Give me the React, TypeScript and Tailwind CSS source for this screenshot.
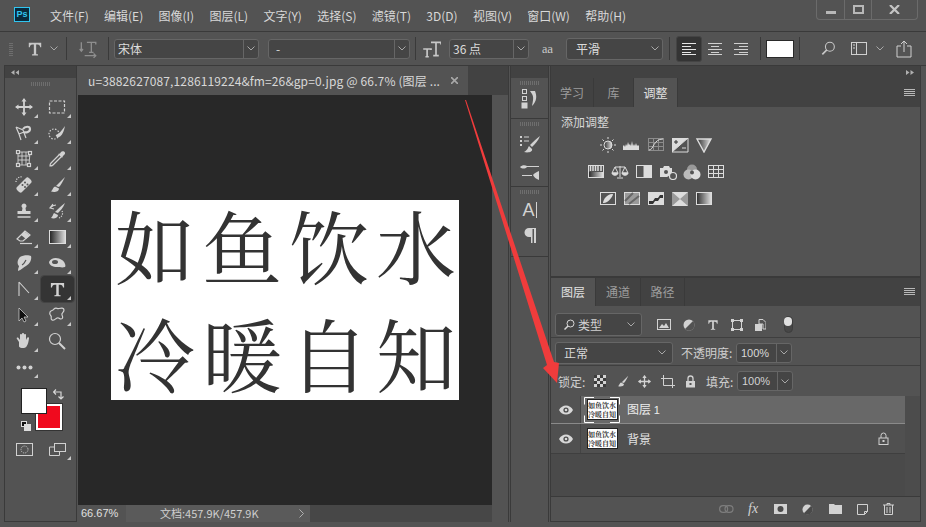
import type { ReactNode } from "react"

const CJK = "font-['Noto_Sans_CJK_SC','Liberation_Sans',sans-serif]"

const menus = ["文件(F)", "编辑(E)", "图像(I)", "图层(L)", "文字(Y)", "选择(S)", "滤镜(T)", "3D(D)", "视图(V)", "窗口(W)", "帮助(H)"]

function Svg({ size = 18, children, className = "" }: { size?: number; children: ReactNode; className?: string }) {
  return (
    <svg width={size} height={size} viewBox="0 0 18 18" fill="none" stroke="currentColor" strokeWidth="1.2" className={className}>
      {children}
    </svg>
  )
}

function Chevron({ className = "" }: { className?: string }) {
  return (
    <svg width="8" height="5" viewBox="0 0 8 5" fill="none" stroke="#a8a8a8" strokeWidth="1" className={className}>
      <path d="M0.5 0.5 4 4 7.5 0.5" />
    </svg>
  )
}

function Divider() {
  return <div className="h-[23px] w-px bg-[#3a3a3a]" />
}

function Grip({ className = "" }: { className?: string }) {
  return <div className={`h-[4px] w-[20px] bg-[repeating-linear-gradient(90deg,#6e6e6e_0,#6e6e6e_1px,transparent_1px,transparent_2px)] ${className}`} />
}

function Select({ w, text, split, className = "" }: { w: string; text: string; split?: boolean; className?: string }) {
  return (
    <div className={`flex h-[20px] items-center rounded-[3px] border border-[#666] bg-[#454545] text-[12px] text-[#dcdcdc] ${w} ${className}`}>
      <span className="flex-1 whitespace-nowrap pl-[3px] leading-[17px]">{text}</span>
      <span className={`flex h-full w-[15px] items-center justify-center ${split ? "border-l border-[#666]" : ""}`}>
        <Chevron />
      </span>
    </div>
  )
}

function MenuLines() {
  return (
    <svg width="11" height="8" viewBox="0 0 11 8" fill="none" stroke="#b8b8b8" strokeWidth="1">
      <path d="M0 .5h11M0 2.500h11M0 4.500h11M0 6.500h11" />
    </svg>
  )
}

function TGlyph({ size = 18 }: { size?: number }) {
  return (
    <svg width={size} height={size} viewBox="0 0 18 18" fill="currentColor">
      <path d="M2 2h14v5h-1.200c-.3-2-1-3-3-3H10.300v10c0 .8.500 1 2 1v1.200H5.700V15c1.500 0 2-.2 2-1V4H6.200c-2 0-2.700 1-3 3H2z" />
    </svg>
  )
}

function Tool({ children, active, corner = true }: { children: ReactNode; active?: boolean; corner?: boolean }) {
  return (
    <div className={`relative flex h-[26px] w-[33px] items-center justify-center rounded-[3px] text-[#d2d2d2] ${active ? "bg-[#343434] outline outline-1 outline-[#444]" : ""}`}>
      {children}
      {corner && <span className="absolute bottom-[2px] right-[3px] h-0 w-0 border-b-[4px] border-l-[4px] border-b-[#c8c8c8] border-l-transparent" />}
    </div>
  )
}

const toolIcons: ReactNode[] = [
  <Svg key="move"><path d="M9 1v16M1 9h16" strokeWidth="1.800" /><path d="M9 0 6.500 3.500h5zM9 18l-2.500-3.500h5zM0 9l3.500-2.500v5zM18 9l-3.500-2.500v5z" fill="currentColor" stroke="none" /></Svg>,
  <Svg key="marquee"><rect x="1.500" y="3" width="15" height="12" strokeDasharray="3 1.500" /></Svg>,
  <Svg key="lasso"><path d="M1 3l7 3 3 8M1 3l3 7 5-2M4 10l2 6" /><path d="M8 5c2-3 7-3 7 0s-4 4-6 3" strokeWidth="2.200" /></Svg>,
  <Svg key="quick"><circle cx="6" cy="10" r="5" strokeDasharray="1.500 1.500" /><path d="M8 11c3-1 6-5 9-9-1 5-3 10-6 11-2 .5-4-1-3-2z" fill="currentColor" stroke="none" /></Svg>,
  <Svg key="crop"><path d="M3 2h12l-1 13H3z M7 2v13M11 2v13M3 6h12M3 10h11" strokeWidth=".9" /><rect x="1.500" y=".5" width="3" height="3" fill="#535353" /><rect x="13.500" y="1.500" width="3" height="3" fill="#535353" /><rect x="1.500" y="13.500" width="3" height="3" fill="#535353" /><rect x="12.500" y="13.500" width="3" height="3" fill="#535353" /></Svg>,
  <Svg key="eyedrop"><path d="M11 5 3 13c-1 1-1 2-1 3 1 0 2 0 3-1l8-8" /><path d="M10 4l4 4 1-2 1.500-1.500c1-1 .5-2.500-.5-3s-2-.5-3 .5L12 3.500z" fill="currentColor" stroke="none" /></Svg>,
  <Svg key="heal"><path d="M2 11 11 2c1-1 2-1 4 1s2 3 1 4l-9 9c-1 1-2 1-4-1s-2-3-1-4z" fill="currentColor" stroke="none" /><circle cx="7.500" cy="9" r="1" fill="#535353" stroke="none" /><circle cx="10" cy="6.500" r="1" fill="#535353" stroke="none" /><circle cx="10" cy="11" r="1" fill="#535353" stroke="none" /><circle cx="12.500" cy="8.500" r="1" fill="#535353" stroke="none" /><path d="M1 6a5 5 0 0 1 6-5" strokeDasharray="1.200 1.200" /></Svg>,
  <Svg key="brush"><path d="M8 10c3-3 6-6 9-9-2 4-4 8-6 10z" fill="currentColor" stroke="none" /><path d="M7 10.500c-2 .5-2 3-4 5 3 1 8 .5 8-3z" fill="currentColor" stroke="none" /></Svg>,
  <Svg key="stamp"><path d="M9 1.500a2.500 2.500 0 0 1 1.500 4.500L11 9h4.500v3h-13V9H7l.5-3A2.500 2.500 0 0 1 9 1.500z" fill="currentColor" stroke="none" /><path d="M2.500 15h13" strokeWidth="1.500" /></Svg>,
  <Svg key="history"><path d="M7 10c3-3 6-6 10-9-2 5-5 8-7 10zM6 11c-1 1-1 3-3 5 3 1 7 0 7-3z" fill="currentColor" stroke="none" /><path d="M8 3C6 3 4 4 2 6M5 2l-3 4 4 1" /><path d="M14 9a5 5 0 0 1-3 7" strokeDasharray="1.200 1.200" /></Svg>,
  <Svg key="eraser"><path d="M2 11 10 3l5 4-7 6H5z" /><path d="M9.500 3.500 15 7.500 11 11 6 7z" fill="currentColor" stroke="none" /><path d="M5 15.500h12" /></Svg>,
  <svg key="gradient" width="17" height="14" viewBox="0 0 17 14"><defs><linearGradient id="gt"><stop offset="0" stopColor="#222" /><stop offset="1" stopColor="#ddd" /></linearGradient></defs><rect x=".5" y=".5" width="16" height="13" fill="url(#gt)" stroke="#ddd" /></svg>,
  <Svg key="smudge"><path d="M5 3c3-2 9-2 11-1 1 3-1 8-5 10-2 1-5 4-8 5 0-3 1-4 1-5-2-2-2-6 1-9z" fill="currentColor" stroke="none" /><path d="M7 11c2-1 3-3 4-5" stroke="#535353" /></Svg>,
  <Svg key="dodge"><path d="M1 8c2-5 9-5 13-2 3 2 4 6 3 7-3 1-5 0-8 0-4 0-8-2-8-5z" fill="currentColor" stroke="none" /><ellipse cx="7" cy="8" rx="3" ry="2" fill="#535353" stroke="none" /></Svg>,
  <Svg key="pen"><path d="M4 2v14M4 2l10 11" strokeWidth="1.100" /></Svg>,
  <TGlyph key="type" size={17} />,
  <svg key="arrow" width="12" height="16" viewBox="0 0 12 16" fill="#111" stroke="#ddd" strokeWidth=".7"><path d="M1 1v13l3-3 2 4 2-1-2-4h4z" /></svg>,
  <Svg key="shape"><path d="M6 3c2-2 3 0 5-.5s5-1 5 1.500-3 3-2 5 1 4-1 4-2-2-4-1-3 3-5 2 0-3-1-4-2-2-1-4 3-1 4-3z" /></Svg>,
  <Svg key="hand"><path d="M4 10 2 7c-1-1 .5-2 1.500-1L5 8V3c0-1.300 2-1.300 2 0v4V2c0-1.300 2-1.300 2 0v5V3c0-1.300 2-1.300 2 0v5l1-2c.5-1.200 2.300-.8 2 .5-.5 3-1 6-2.500 8-1.500 2-6 2-7.500 0z" fill="currentColor" stroke="none" /></Svg>,
  <Svg key="zoom"><circle cx="7" cy="7" r="5.500" /><path d="M11 11l6 6" strokeWidth="2" /></Svg>,
  <svg key="more" width="17" height="5" viewBox="0 0 17 5" fill="currentColor"><circle cx="2.500" cy="2.500" r="2" /><circle cx="8.500" cy="2.500" r="2" /><circle cx="14.500" cy="2.500" r="2" /></svg>,
]

const adjustRows = [
  ["sun", "hist", "curve", "expo", "tri"],
  ["hsl", "scale", "half", "cam", "mix", "grid"],
  ["inv", "post", "thres", "sel", "grad"],
]

function AdjustIcon({ kind }: { kind: string }) {
  const box = "#dcdcdc"
  return (
    <svg width="18" height="16" viewBox="0 0 18 16" fill="none" stroke={box} strokeWidth="1">
      <defs>
        <linearGradient id={`g-${kind}`}>
          <stop offset="0" stopColor="#2e2e2e" />
          <stop offset="1" stopColor="#e2e2e2" />
        </linearGradient>
      </defs>
      {kind === "sun" && <><circle cx="9" cy="8" r="4" fill="url(#g-sun)" /><path d="M9 0v2M9 14v2M1 8h2M15 8h2M3.500 2.500l1.500 1.500M13 12l1.500 1.500M14.500 2.500 13 4M5 12l-1.500 1.500" /></>}
      {kind === "hist" && <path d="M0 13V9l1-1 1 2 1-3 1 2 1-4 1 3 1-1 1 2 1-5 1 5 1-2 1 2 1-3 1 3 1-1 1 1v4z" fill={box} stroke="none" />}
      {kind === "curve" && <><rect x="1.500" y="1.500" width="15" height="12" stroke="#8c8c8c" /><path d="M6.500 1.500v12M11.500 1.500v12M1.500 5.500h15M1.500 9.500h15" stroke="#8c8c8c" /><path d="M2 13c5 0 4-11 14-11" /></>}
      {kind === "expo" && <><path d="M1 1h16v14H1z" fill={box} stroke="none" /><path d="M1 15 17 1v14z" fill="#535353" stroke={box} /><path d="M3 5h4M5 3v4" stroke="#333" /><path d="M11 11h4" /></>}
      {kind === "tri" && <path d="M2 2h14L9 15z" fill="url(#g-tri)" strokeWidth="1.400" />}
      {kind === "hsl" && <><rect x="1.500" y="1.500" width="15" height="12" /><path d="M3.500 2v5M6 2v5M8.500 2v5M11 2v5M14 2v5" strokeWidth="1.500" /><rect x="2" y="8" width="14" height="5" fill="url(#g-hsl)" stroke="none" /></>}
      {kind === "scale" && <><path d="M9 2v11M4 3h10M6 14h6" /><path d="M4 3 1 9h6zM14 3l-3 6h6z" /><path d="M1 9c0 3 6 3 6 0zM11 9c0 3 6 3 6 0z" fill={box} /></>}
      {kind === "half" && <><rect x="1.500" y="1.500" width="15" height="12" /><rect x="9" y="1.500" width="7.500" height="12" fill={box} /></>}
      {kind === "cam" && <><path d="M1 4h3l1-2h5l1 2h2v6l-5 3H1z" fill={box} stroke="none" /><circle cx="7" cy="8" r="2" fill="#535353" stroke="none" /><circle cx="14" cy="12" r="3.500" fill="#535353" stroke={box} strokeWidth="1.200" /></>}
      {kind === "mix" && <><circle cx="9" cy="5.500" r="5" fill="#999" stroke="none" /><circle cx="5.500" cy="10.500" r="5" fill="#bbb" stroke="none" /><circle cx="12.500" cy="10.500" r="5" fill="#ddd" stroke="none" /><circle cx="9" cy="8.500" r="2" fill="#555" stroke="none" /></>}
      {kind === "grid" && <><rect x="1.500" y="1.500" width="15" height="12" /><path d="M6.500 1.500v12M11.500 1.500v12M1.500 5.500h15M1.500 9.500h15" /></>}
      {kind === "inv" && <><rect x="1.500" y="1.500" width="15" height="12" /><path d="M4 12c4 1 10-6 10-9-5-1-10 5-10 9z" fill={box} stroke="none" /></>}
      {kind === "post" && <><rect x="1.500" y="1.500" width="15" height="12" fill="#9a9a9a" /><path d="M2 10 10 2M6 13l10-8" strokeWidth="2" stroke="#666" /></>}
      {kind === "thres" && <><rect x="1.500" y="1.500" width="15" height="12" fill={box} /><path d="M2 10h4l2-3h3l2-3h3v3h-3l-2 3H8l-2 3H2z" fill="#333" stroke="none" /></>}
      {kind === "sel" && <><path d="M1 1h16v14H1z" fill="#999" stroke="none" /><path d="M1 1h16L9 8zM1 15h16L9 8z" fill={box} stroke="none" /></>}
      {kind === "grad" && <rect x="1.500" y="1.500" width="15" height="12" fill="url(#g-grad)" />}
    </svg>
  )
}

function Thumb({ selected }: { selected?: boolean }) {
  return (
    <div className="relative ml-[4px] flex h-[24px] w-[34px] items-center justify-center">
      <div className="flex h-[21px] w-[31px] flex-col items-center justify-center border border-[#222] bg-white font-['Noto_Serif_CJK_SC','Noto_Sans_CJK_SC',serif] text-[7px] font-bold leading-[9px] text-[#333]">
        <span className="whitespace-nowrap">如鱼饮水</span>
        <span className="whitespace-nowrap">冷暖自知</span>
      </div>
      {selected && (
        <svg width="36" height="26" viewBox="0 0 36 26" fill="none" stroke="#fff" strokeWidth="1" className="absolute left-[-1px] top-[-1px]">
          <path d="M10 .5H.5v7M26 .5h9.500v7M10 25.500H.5v-7M26 25.500h9.500v-7" />
        </svg>
      )}
    </div>
  )
}

function Eye() {
  return (
    <svg width="14" height="10" viewBox="0 0 14 10" fill="#d8d8d8">
      <path d="M0 5c3-6 11-6 14 0-3 6-11 6-14 0z" />
      <circle cx="7" cy="5" r="2.600" fill="#4a4a4a" />
      <circle cx="7" cy="5" r="1.300" />
    </svg>
  )
}

function LockIcon({ className = "" }: { className?: string }) {
  return (
    <svg width="11" height="13" viewBox="0 0 11 13" fill="none" stroke="currentColor" strokeWidth="1.300" className={className}>
      <path d="M3 6V3.500a2.500 2.500 0 0 1 5 0V6" />
      <rect x="1" y="6" width="9" height="6.500" fill="currentColor" stroke="none" />
      <rect x="4.500" y="8" width="2" height="2" fill="#535353" stroke="none" />
    </svg>
  )
}

function PercentBox() {
  return (
    <div className="flex h-[20px] w-[56px] items-center rounded-[3px] border border-[#666] bg-[#454545]">
      <span className="w-[40px] border-r border-[#666] pl-[4px] font-['Liberation_Sans',sans-serif] text-[11px] leading-[18px]">100%</span>
      <Chevron className="ml-[3px]" />
    </div>
  )
}

export default function App() {
  return (
    <div className={`relative flex h-[527px] w-[926px] flex-col overflow-hidden bg-[#535353] text-[12px] text-[#d8d8d8] ${CJK}`}>
      {/* Menu bar */}
      <div className="flex h-[32px] shrink-0 items-start border-b border-[#3a3a3a] pl-[14px]">
        <div className="mt-[7px] flex h-[15px] w-[16px] items-center justify-center border border-[#31c5f0] bg-[#0a2a3c] font-['Liberation_Sans',sans-serif] text-[9px] font-bold leading-none text-[#31c5f0]">
          Ps
        </div>
        <div className="ml-[20px] mt-[7px] flex gap-[15.3px] text-[12px] leading-[17px]">
          {menus.map((m) => (
            <span key={m} className="whitespace-nowrap">{m}</span>
          ))}
        </div>
        <div className="ml-auto mr-[8px] flex h-[20px] w-[102px] rounded-b-[4px] border border-t-0 border-[#6b6b6b] text-[#c4c4c4]">
          <div className="flex w-[28px] items-center justify-center border-r border-[#6b6b6b]"><div className="mt-[5px] h-[3px] w-[10px] bg-[#b8b8b8]" /></div>
          <div className="flex w-[27px] items-center justify-center border-r border-[#6b6b6b]"><div className="h-[9px] w-[11px] border-2 border-[#b8b8b8]" /></div>
          <div className="flex flex-1 items-center justify-center">
            <svg width="11" height="9" viewBox="0 0 11 9" stroke="#c4c4c4" strokeWidth="2.200"><path d="M1 0l9 9M10 0 1 9" /></svg>
          </div>
        </div>
      </div>

      {/* Options bar */}
      <div className="ml-[4px] flex h-[34px] shrink-0 items-center border-b border-[#3a3a3a] text-[#c8c8c8]">
        <div className="ml-[5px] h-[14px] w-[4px] bg-[repeating-linear-gradient(0deg,#6e6e6e_0,#6e6e6e_1px,transparent_1px,transparent_2px)]" />
        <div className="ml-[14px] flex w-[31px] items-center gap-[7px]"><TGlyph size={16} /><Chevron /></div>
        <div className="ml-[8px]"><Divider /></div>
        <div className="ml-[11px] text-[#8e8e8e]">
          <Svg size={20}><path d="M8 3h8v2M12 3v9M10 12h4M3 3v8M1.500 9 3 11l1.500-2M6 15h10M14 13l2 2-2 2" /></Svg>
        </div>
        <div className="ml-[10px]"><Divider /></div>
        <Select w="w-[145px]" text="宋体" split className="ml-[5px]" />
        <Select w="w-[142px]" text="-" split className="ml-[9px] [&>span:first-child]:pl-[7px]" />
        <div className="ml-[5px]"><Divider /></div>
        <div className="ml-[5px]">
          <Svg size={20}><path d="M9 3h9v2M13.500 3v12M11 15h5M2 9h7v1M5.500 9v7M4 16h3" strokeWidth="1.500" /></Svg>
        </div>
        <Select w="w-[80px]" text="36 点" split className="ml-[8px]" />
        <span className="ml-[13px] w-[19px] font-['Liberation_Serif',serif] text-[12px] leading-none">a<span className="text-[13px]">a</span></span>
        <Select w="w-[97px]" text="平滑" className="ml-[5px] h-[22px] [&>span:first-child]:pl-[9px]" />
        <div className="ml-[6px]"><Divider /></div>
        <div className="ml-[6px] flex h-[26px] w-[26px] items-center justify-center rounded-[3px] border border-[#444] bg-[#343434]">
          <svg width="14" height="12" viewBox="0 0 14 12" stroke="#e6e6e6"><path d="M0 .5h14M0 3.500h9M0 6.500h14M0 9.500h9M0 11.500h14" /></svg>
        </div>
        <div className="ml-[4px] flex w-[18px] justify-center">
          <svg width="14" height="12" viewBox="0 0 14 12" stroke="#d0d0d0"><path d="M0 .5h14M3 3.500h8M0 6.500h14M3 9.500h8M0 11.500h14" /></svg>
        </div>
        <div className="ml-[8px] flex w-[18px] justify-center">
          <svg width="14" height="12" viewBox="0 0 14 12" stroke="#d0d0d0"><path d="M0 .5h14M5 3.500h9M0 6.500h14M5 9.500h9M0 11.500h14" /></svg>
        </div>
        <div className="ml-[10px]"><Divider /></div>
        <div className="ml-[5px] h-[18px] w-[28px] border border-[#2a2a2a] bg-white" />
        <div className="ml-[5px]"><Divider /></div>
        <div className="ml-[21px]">
          <Svg size={16}><circle cx="10" cy="6.500" r="5" /><path d="M6.500 10 1.500 15" strokeWidth="1.800" /></Svg>
        </div>
        <div className="ml-[14px]">
          <svg width="17" height="13" viewBox="0 0 17 13" fill="none" stroke="#d0d0d0"><rect x=".5" y=".5" width="15" height="12" /><path d="M5.500 1v11" /><path d="M2 3h2M2 6h2" /></svg>
        </div>
        <Chevron className="ml-[8px]" />
        <div className="ml-[12px]">
          <svg width="16" height="18" viewBox="0 0 16 18" fill="none" stroke="#d0d0d0"><path d="M5 6H1v11h14V6h-4M8 12V1M5 4l3-3 3 3" /></svg>
        </div>
      </div>

      {/* Workspace */}
      <div className="flex min-h-0 flex-1 pb-[5px] pl-[4px]">
        {/* Tools */}
        <div className="flex w-[73px] shrink-0 flex-col items-center border-x border-b border-[#3a3a3a]">
          <div className="flex h-[12px] w-full items-center bg-[#424242] pl-[6px] text-[#b0b0b0]">
            <svg width="8" height="5" viewBox="0 0 8 5" fill="currentColor"><path d="M3.500 0v5L0 2.500zM8 0v5L4.500 2.500z" /></svg>
          </div>
          <Grip className="mt-[4px]" />
          <div className="mt-[8px] grid w-[66px] grid-cols-2 justify-items-center">
            {toolIcons.slice(0, 20).map((icon, i) => (
              <Tool key={i} active={i === 15} corner={i !== 19}>{icon}</Tool>
            ))}
            <Tool>{toolIcons[20]}</Tool>
          </div>
          <div className="relative ml-[16px] mt-[8px] h-[46px] w-[46px] self-start">
            <div className="absolute left-[15px] top-[16px] h-[26px] w-[26px] border-2 border-white bg-[#f00a1e] outline outline-1 outline-[#333]" />
            <div className="absolute left-[0px] top-[0px] h-[26px] w-[26px] border border-[#222] bg-white" />
            <svg width="11" height="11" viewBox="0 0 11 11" fill="none" stroke="#d8d8d8" strokeWidth="1.200" className="absolute left-[32px] top-[1px]">
              <path d="M3 .5 .5 3 3 5.500M1 3h7v6M5.500 7.500 8 10l2.500-2.500" />
            </svg>
            <div className="absolute left-[0px] top-[33px] h-[6px] w-[6px] border border-[#ddd] bg-[#111]" />
            <div className="absolute left-[3px] top-[36px] h-[7px] w-[7px] bg-[#ddd]" />
          </div>
          <div className="mt-[2px] grid w-[66px] grid-cols-2 justify-items-center">
            <Tool corner={false}>
              <svg width="17" height="13" viewBox="0 0 17 13" fill="none" stroke="#d0d0d0"><rect x=".5" y=".5" width="16" height="12" /><circle cx="8.500" cy="6.500" r="3.500" strokeDasharray="1 1" /></svg>
            </Tool>
            <Tool>
              <svg width="17" height="13" viewBox="0 0 17 13" fill="none" stroke="#d0d0d0"><rect x="5.500" y=".5" width="11" height="8" /><path d="M5 4H.5v8.500h10V9" /></svg>
            </Tool>
          </div>
        </div>

        {/* Document */}
        <div className="ml-[1px] flex w-[431px] shrink-0 flex-col border-r border-[#3a3a3a]">
          <div className="flex h-[29px] shrink-0 bg-[#424242]">
            <div className="flex w-[390px] items-center justify-between bg-[#535353] pl-[10px] pr-[10px] text-[12px] tracking-[0.13px]">
              <span className="whitespace-nowrap">u=3882627087,1286119224&amp;fm=26&amp;gp=0.jpg @ 66.7% (图层 ...</span>
              <svg width="7" height="7" viewBox="0 0 7 7" stroke="#a8a8a8" strokeWidth="1.600"><path d="M0 0l7 7M7 0 0 7" /></svg>
            </div>
          </div>
          <div className="flex min-h-0 flex-1">
            <div className="flex flex-1 flex-col">
              <div className="flex flex-1 items-center justify-center bg-[#282828]">
                <div className="flex h-[200px] w-[348px] flex-col items-start justify-center bg-white pb-[5px] pl-[4px] font-['Noto_Serif_CJK_SC','Noto_Sans_CJK_SC',serif] text-[80px] leading-[108px] tracking-[7px] text-[#333]">
                  <span className="whitespace-nowrap">如鱼饮水</span>
                  <span className="whitespace-nowrap">冷暖自知</span>
                </div>
              </div>
              <div className="flex h-[17px] shrink-0 items-center bg-[#474747] text-[11px]">
                <span className="flex h-full w-[48px] items-center bg-[#535353] pl-[3px] font-['Liberation_Sans',sans-serif] text-[#e0e0e0]">66.67%</span>
                <div className="flex h-full w-[184px] items-center justify-between bg-[#5a5a5a] pl-[34px] pr-[6px] text-[#cfcfcf]">
                  <span className="whitespace-nowrap">文档:457.9K/457.9K</span>
                  <svg width="5" height="9" viewBox="0 0 5 9" fill="none" stroke="#b0b0b0"><path d="M.5.500l4 4-4 4" /></svg>
                </div>
              </div>
            </div>
            <div className="w-[16px] shrink-0 bg-[#535353]" />
          </div>
        </div>

        <div className="w-[1px] shrink-0" />

        {/* Collapsed dock */}
        <div className="flex w-[39px] shrink-0 flex-col border-x border-[#3a3a3a]">
          <div className="h-[12px] shrink-0 bg-[#424242]" />
          <div className="flex h-[41px] flex-col items-center border-b border-[#3a3a3a] pt-[3px]">
            <Grip />
            <svg width="18" height="24" viewBox="0 0 18 24" fill="none" stroke="#d2d2d2" className="mt-[3px]">
              <rect x="1.500" y="1.500" width="4" height="4" /><rect x="1.500" y="8.500" width="4" height="4" /><rect x="1" y="15" width="5" height="5" fill="#d2d2d2" />
              <path d="M9 3h5c2 5 2 10-3 15 1-5 2-9 0-12z" fill="#d2d2d2" stroke="none" />
            </svg>
          </div>
          <div className="flex h-[68px] flex-col items-center gap-[8px] border-b border-[#3a3a3a] pt-[3px]">
            <Grip />
            <svg width="22" height="20" viewBox="0 0 22 20" fill="#d2d2d2">
              <path d="M1 2h2v2H1zM1 6h2v2H1zM1 10h2v2H1zM5 2.500h5v1H5zM5 6.500h5v1H5z" />
              <path d="M11 11c3-3 6-6 10-9-2 5-5 8-8 11zM10 12c-1 1-1 4-5 6 4 1 9 0 8-3z" />
            </svg>
            <svg width="20" height="16" viewBox="0 0 20 16" fill="#d2d2d2" className="mt-[2px]">
              <path d="M0 3c2-2 5-2 7-1h12v1H7C5 5 2 5 0 3zM2 11h10v1H2zM13 11c1-2 4-3 6-4v9c-3-1-5-3-6-5z" />
            </svg>
          </div>
          <div className="flex h-[70px] flex-col items-center border-b border-[#3a3a3a] pt-[3px] text-[#d2d2d2]">
            <Grip />
            <div className="mt-[4px] flex h-[24px] items-center font-['Liberation_Sans',sans-serif] text-[18px] leading-none">A<span className="ml-[1px] h-[16px] w-px bg-[#d2d2d2]" /></div>
            <svg width="13" height="15" viewBox="0 0 13 15" fill="#d2d2d2" className="mt-[6px]">
              <path d="M6 0h7v15h-2V1H9.500v14H8V9H6A4.500 4.500 0 0 1 6 0z" />
            </svg>
          </div>
        </div>

        {/* Panels */}
        <div className="ml-[1px] flex w-[371px] shrink-0 flex-col border-x border-b border-[#3a3a3a]">
          <div className="flex h-[12px] shrink-0 items-center justify-between bg-[#424242] pl-[1px] pr-[6px] text-[#b0b0b0]">
            <span />
            <svg width="8" height="5" viewBox="0 0 8 5" fill="currentColor"><path d="M0 0v5l3.500-2.500zM4.500 0v5L8 2.500z" /></svg>
          </div>

          {/* Adjustments */}
          <div className="flex h-[200px] shrink-0 flex-col border-b-2 border-[#3a3a3a]">
            <div className="flex h-[29px] shrink-0 items-center bg-[#424242] pr-[5px] text-[#9d9d9d]">
              <span className="flex h-full w-[43px] items-center justify-center border-r border-[#3a3a3a]">学习</span>
              <span className="flex h-full w-[40px] items-center justify-center border-r border-[#3a3a3a]">库</span>
              <span className="flex h-full w-[44px] items-center justify-center border-r border-[#3a3a3a] bg-[#535353] text-[#e2e2e2]">调整</span>
              <span className="ml-auto"><MenuLines /></span>
            </div>
            <div className="pl-[10px] pt-[6px] text-[12px] leading-[17px]">添加调整</div>
            <div className="mt-[7px] flex flex-col items-center gap-[11px] pr-[159px]">
              {adjustRows.map((row, i) => (
                <div key={i} className="flex gap-[6px]">
                  {row.map((k) => <AdjustIcon key={k} kind={k} />)}
                </div>
              ))}
            </div>
          </div>

          {/* Layers */}
          <div className="flex min-h-0 flex-1 flex-col">
            <div className="flex h-[28px] shrink-0 items-center bg-[#424242] pr-[5px] text-[#9d9d9d]">
              <span className="flex h-full w-[45px] items-center justify-center border-r border-[#3a3a3a] bg-[#535353] text-[#e2e2e2]">图层</span>
              <span className="flex h-full w-[45px] items-center justify-center border-r border-[#3a3a3a]">通道</span>
              <span className="flex h-full w-[44px] items-center justify-center border-r border-[#3a3a3a]">路径</span>
              <span className="ml-auto"><MenuLines /></span>
            </div>
            <div className="flex h-[32px] shrink-0 items-center border-b border-[#3f3f3f] pl-[4px] pt-[6px] text-[#d2d2d2]">
              <div className="flex h-[23px] w-[87px] items-center rounded-[3px] border border-[#666] bg-[#454545]">
                <svg width="11" height="11" viewBox="0 0 11 11" fill="none" stroke="#d8d8d8" className="ml-[8px]"><circle cx="6.500" cy="4.500" r="3.500" /><path d="M4 7 .5 10.500" strokeWidth="1.500" /></svg>
                <span className="ml-[3px] flex-1 text-[12px]">类型</span>
                <Chevron className="mr-[6px]" />
              </div>
              <svg width="14" height="11" viewBox="0 0 14 11" className="ml-[15px]"><rect x=".5" y=".5" width="13" height="10" fill="none" stroke="#d2d2d2" /><path d="M2 9l3-4 2 2 2-3 3 5z" fill="#d2d2d2" /></svg>
              <svg width="12" height="12" viewBox="0 0 12 12" className="ml-[12px]"><circle cx="6" cy="6" r="5.500" fill="#d2d2d2" /><path d="M10 2a5.500 5.500 0 0 1-8 8z" fill="#535353" /></svg>
              <div className="ml-[12px] text-[#d2d2d2]"><TGlyph size={12} /></div>
              <svg width="12" height="12" viewBox="0 0 12 12" fill="none" stroke="#d2d2d2" className="ml-[12px]"><rect x="1.500" y="1.500" width="9" height="9" /><rect x="0" y="0" width="3" height="3" fill="#d2d2d2" stroke="none" /><rect x="9" y="0" width="3" height="3" fill="#d2d2d2" stroke="none" /><rect x="0" y="9" width="3" height="3" fill="#d2d2d2" stroke="none" /><rect x="9" y="9" width="3" height="3" fill="#d2d2d2" stroke="none" /></svg>
              <svg width="11" height="12" viewBox="0 0 11 12" className="ml-[12px]"><path d="M4 .5h4l3 3V10H8V5H4z" fill="none" stroke="#d2d2d2" /><rect x="0" y="5" width="7" height="7" fill="#d2d2d2" /></svg>
              <div className="ml-[18px] flex h-[17px] w-[9px] items-start rounded-full border border-[#3d3d3d] bg-[#474747]">
                <div className="-ml-px h-[9px] w-[9px] rounded-full bg-[#e0e0e0]" />
              </div>
            </div>
            <div className="flex h-[28px] shrink-0 items-center border-b border-[#3f3f3f] pl-[4px] pt-[2px]">
              <div className="flex h-[22px] w-[118px] items-center rounded-[3px] border border-[#666] bg-[#454545]">
                <span className="flex-1 pl-[8px]">正常</span>
                <Chevron className="mr-[6px]" />
              </div>
              <span className="ml-[8px] w-[55px] whitespace-nowrap text-[12px] leading-[17px] text-[#cfcfcf]">不透明度:</span>
              <PercentBox />
            </div>
            <div className="flex h-[30px] shrink-0 items-center pl-[7px] text-[#d2d2d2]">
              <span className="w-[36px] whitespace-nowrap leading-[17px] text-[#cfcfcf]">锁定:</span>
              <svg width="12" height="12" viewBox="0 0 12 12"><rect width="12" height="12" fill="#d2d2d2" /><path d="M0 0h3v3H0zM6 0h3v3H6zM3 3h3v3H3zM9 3h3v3H9zM0 6h3v3H0zM6 6h3v3H6zM3 9h3v3H3zM9 9h3v3H9z" fill="#3c3c3c" /></svg>
              <svg width="13" height="13" viewBox="0 0 18 18" fill="#d2d2d2" className="ml-[10px]"><path d="M8 10c3-3 6-6 9-9-2 4-4 8-6 10zM7 10.500c-2 .5-2 3-4 5 3 1 8 .5 8-3z" /></svg>
              <svg width="13" height="13" viewBox="0 0 18 18" stroke="#d2d2d2" strokeWidth="1.800" className="ml-[9px]"><path d="M9 1v16M1 9h16" /><path d="M9 0 6 4h6zM9 18l-3-4h6zM0 9l4-3v6zM18 9l-4-3v6z" fill="#d2d2d2" stroke="none" /></svg>
              <svg width="14" height="13" viewBox="0 0 14 13" fill="none" stroke="#d2d2d2" className="ml-[10px]"><path d="M0 3.500h11.500V13M2.500 0v10.500H14" /></svg>
              <LockIcon className="ml-[10px]" />
              <span className="ml-[10px] w-[31px] whitespace-nowrap leading-[17px] text-[#cfcfcf]">填充:</span>
              <PercentBox />
            </div>

            {/* Layer list */}
            <div className="flex min-h-0 flex-1">
              <div className="flex w-[354px] flex-col bg-[#4a4a4a]">
                <div className="flex h-[28px] shrink-0 items-center border-b border-[#8a8a8a] bg-[#686868]">
                  <div className="flex h-full w-[30px] items-center justify-center border-r border-[#444] bg-[#535353]"><Eye /></div>
                  <Thumb selected />
                  <span className="ml-[8px] text-[#ececec]">图层 <span className="font-['Liberation_Sans',sans-serif] text-[11px]">1</span></span>
                </div>
                <div className="flex h-[30px] shrink-0 items-center border-b border-[#3f3f3f] bg-[#505050]">
                  <div className="flex h-full w-[30px] items-center justify-center border-r border-[#444]"><Eye /></div>
                  <Thumb />
                  <span className="ml-[8px] text-[#e2e2e2]">背景</span>
                  <svg width="11" height="13" viewBox="0 0 11 13" fill="none" stroke="#cfcfcf" className="ml-auto mr-[16px]"><path d="M3 6V3.500a2.500 2.500 0 0 1 5 0V6" /><rect x="1" y="6" width="9" height="6.500" /><rect x="4.500" y="8" width="2" height="2" fill="#cfcfcf" stroke="none" /></svg>
                </div>
              </div>
              <div className="flex-1 bg-[#4c4c4c]" />
            </div>

            {/* Layer footer */}
            <div className="flex h-[25px] shrink-0 items-center border-t border-[#3a3a3a] pl-[168px] text-[#d2d2d2]">
              <svg width="15" height="8" viewBox="0 0 15 8" fill="none" stroke="#7d7d7d" strokeWidth="1.200"><rect x=".6" y=".6" width="8" height="6.800" rx="3.400" /><rect x="6" y=".6" width="8" height="6.800" rx="3.400" /></svg>
              <span className="ml-[14px] w-[12px] font-['Liberation_Serif',serif] text-[14px] italic leading-none">fx</span>
              <svg width="13" height="10" viewBox="0 0 13 10" className="ml-[14px]"><rect width="13" height="10" fill="#d2d2d2" /><circle cx="6.500" cy="5" r="3" fill="#4a4a4a" /></svg>
              <svg width="11" height="11" viewBox="0 0 12 12" className="ml-[15px]"><circle cx="6" cy="6" r="5.500" fill="#d2d2d2" /><path d="M10 2a5.500 5.500 0 0 1-8 8z" fill="#4a4a4a" /></svg>
              <svg width="13" height="10" viewBox="0 0 13 10" fill="#d2d2d2" className="ml-[16px]"><path d="M0 0h5l1 1h7v9H0z" /></svg>
              <svg width="11" height="11" viewBox="0 0 11 11" fill="none" stroke="#d2d2d2" className="ml-[15px]"><path d="M.5.500h10v7l-3 3h-7zM10.500 7.500h-3v3" /></svg>
              <svg width="11" height="12" viewBox="0 0 11 12" fill="none" stroke="#d2d2d2" className="ml-[15px]"><path d="M0 2h11M4 2V.5h3V2M1.500 2v9.500h8V2M4 4v6M7 4v6" /></svg>
            </div>
          </div>
        </div>
      </div>

      {/* Annotation arrow drawn over the screenshot */}
      <svg width="926" height="527" viewBox="0 0 926 527" className="pointer-events-none absolute left-0 top-0">
        <path d="M465 100 466 100 554 362 559 363 557 383 543 368 547 365z" fill="#f03c3c" />
      </svg>
    </div>
  )
}
